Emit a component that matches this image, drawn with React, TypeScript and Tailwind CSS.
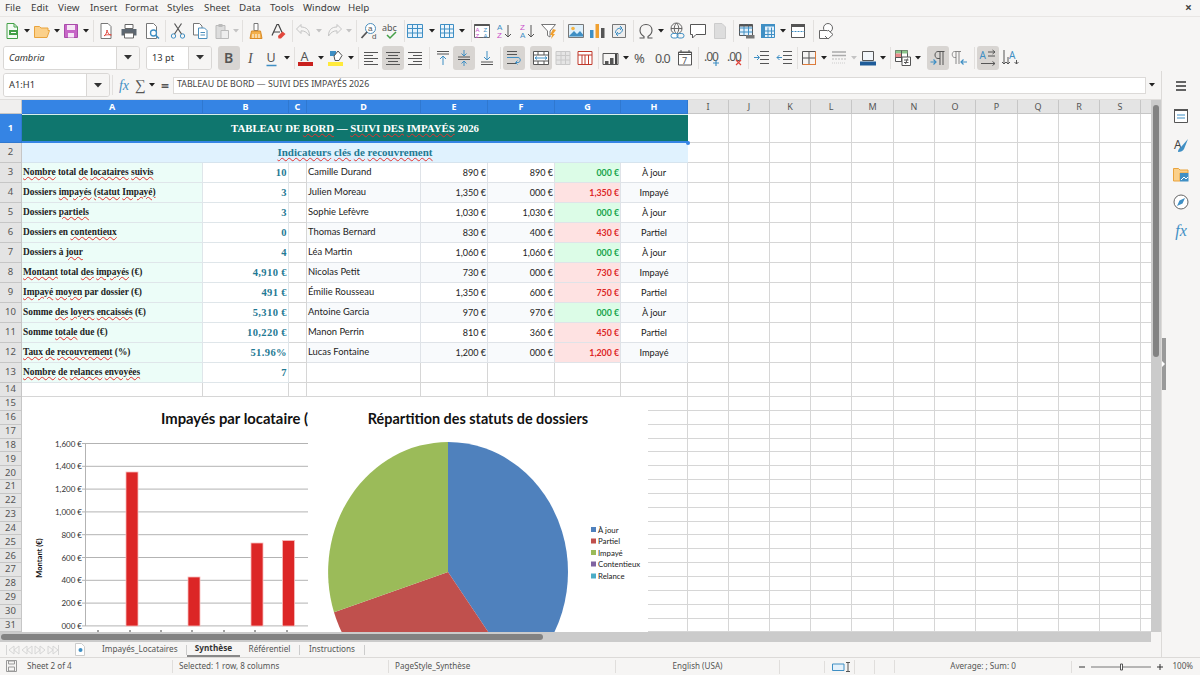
import React from "react";

const ink = "#555";
const blue = "#3f8fc4";

const Svg = ({ children, s = 18 }: { children: React.ReactNode; s?: number }) => (
  <svg width={s} height={s} viewBox="0 0 18 18" fill="none" strokeWidth={1} className="shrink-0">
    {children}
  </svg>
);

const lines = (ys: number[], x1: number, x2: number, c = ink) =>
  ys.map((y, i) => <path key={i} d={`M${x1} ${y + 0.5}H${x2}`} stroke={c} />);

const Icons: Record<string, React.ReactNode> = {
  new: (<><path d="M4 1.500h7l3.500 3.500v11.500H4z" fill="#f4fbf4" stroke="#43a047" /><path d="M11 1.500V5h3.500" stroke="#43a047" /><path d="M6 8h9v5H6z" fill="#43a047" /><path d="M8 10.500h5" stroke="#fff" /></>),
  open: (<path d="M1.500 4.500h5l1.500 1.500h7v2.500h1.500l-2.500 7h-12.500z" fill="#fbd08a" stroke="#e9a33c" />),
  save: (<><path d="M2.500 2.500h13v13h-13z" fill="#c766c7" stroke="#a94ba9" /><path d="M5 3h8v5H5z" fill="#f6e6f6" /><path d="M6 11h6v4.500H6z" fill="#f6e6f6" /></>),
  pdf: (<><path d="M4 1.500h7l3 3V16.500H4z" fill="#fff" stroke="#777" /><path d="M7 14c2-1 3-4 3-6 0 2 2 5 4 5s-6-1-7 1z" stroke="#e0463c" /></>),
  print: (<><path d="M5 2.500h8v4H5z" fill="#fff" stroke="#666" /><path d="M1.500 7h15v6.500h-15z" fill="#5c6670" /><path d="M4.500 11h9v5h-9z" fill="#fff" stroke="#666" /></>),
  preview: (<><path d="M3.500 1.500h7l3 3V16.500h-10z" fill="#fff" stroke="#777" /><circle cx="10.500" cy="11" r="3" fill="#fff" stroke={blue} strokeWidth="1.300" /><path d="M13 13.500l3 3" stroke={blue} strokeWidth="1.500" /></>),
  cut: (<><circle cx="4.500" cy="14" r="2.200" stroke={blue} /><circle cx="13.500" cy="14" r="2.200" stroke={blue} /><path d="M5.500 12L12.500 1.500M12.500 12L5.500 1.500" stroke={ink} strokeWidth="1.200" /></>),
  copy: (<><path d="M2.500 1.500h6l2.500 2.500v9h-8.500z" fill="#fff" stroke="#777" /><path d="M7.500 6h6l2.500 2.500v8h-8.500z" fill="#fff" stroke="#4c8fbd" /><path d="M9.500 10.500h4.500M9.500 13h4.500" stroke="#4c8fbd" /></>),
  paste: (<><path d="M3 3.500h9v13H3z" fill="#ddd" stroke="#bbb" /><path d="M5.500 2h4v3h-4z" fill="#bbb" /><path d="M8 8.500h7.500v8H8z" fill="#eee" stroke="#bbb" /></>),
  clone: (<><path d="M7 1.500h4v7H7z" fill="#fff" stroke="#777" /><path d="M4.500 9h9L15 16.500H3z" fill="#f3b04b" stroke="#d98a25" /><path d="M6 12v4M9 12v4M12 12v4" stroke="#fff" /></>),
  clear: (<><path d="M3 13.500L8 2.500h1.500l3.500 8" stroke="#444" strokeWidth="1.200" /><path d="M5 10h6" stroke="#444" /><path d="M9 14l4.500-4.500 3 2.500-4.500 4.500H9.500z" fill="#e2483d" /></>),
  undo: (<path d="M6 2.500L1.500 7l4.500 4.500V8.800c4 0 6 1.700 8.500 5.200 0-6-3-9-8.500-9z" stroke="#c5c5c5" />),
  redo: (<path d="M12 2.500L16.500 7 12 11.500V8.800c-4 0-6 1.700-8.500 5.200 0-6 3-9 8.500-9z" stroke="#c5c5c5" />),
  find: (<><circle cx="10.500" cy="6.500" r="5" fill="#fff" stroke="#4c8fbd" /><path d="M7 10L1.500 16" stroke={ink} strokeWidth="1.800" /><text x="8" y="9" fontSize="8" fill={ink} fontFamily="Liberation Sans">a</text><text x="12" y="17" fontSize="8" fill={ink} fontFamily="Liberation Sans">d</text></>),
  spell: (<><text x="0" y="9" fontSize="9" fill={ink} fontFamily="Noto Sans">abc</text><path d="M5 13l3 3 6-6" stroke="#43a047" strokeWidth="1.500" /></>),
  table: (<><path d="M1.500 2.500h15v13h-15z" fill="#e6f2fb" stroke="#3f8fc4" /><path d="M6.500 2.500v13M11.500 2.500v13M1.500 6.500h15M1.500 11h15" stroke="#3f8fc4" /></>),
  table2: (<><path d="M2.500 2.500h13v13h-13z" fill="#eef6fc" stroke="#3f8fc4" /><path d="M6.500 2.500v13M11.500 2.500v13M2.500 7h13M2.500 11h13" stroke="#3f8fc4" /></>),
  sort: (<><path d="M1.500 2.500h15v13h-15z" fill="#fff" stroke="#666" /><path d="M1.500 2h15v2h-15z" fill="#555" /><text x="2.500" y="10" fontSize="6" fill="#c94fc9" fontFamily="Liberation Sans">A</text><text x="2.500" y="15.500" fontSize="6" fill="#c94fc9" fontFamily="Liberation Sans">Z</text><text x="10.500" y="10" fontSize="6" fill="#3f8fc4" fontFamily="Liberation Sans">Z</text><text x="10.500" y="15.500" fontSize="6" fill="#3f8fc4" fontFamily="Liberation Sans">A</text></>),
  az: (<><text x="2" y="8" fontSize="8" fill="#3f8fc4" fontFamily="Liberation Sans">A</text><text x="2" y="16" fontSize="8" fill="#c94fc9" fontFamily="Liberation Sans">Z</text><path d="M13 3v12M10 12l3 3 3-3" stroke={ink} /></>),
  za: (<><text x="2" y="8" fontSize="8" fill="#c94fc9" fontFamily="Liberation Sans">Z</text><text x="2" y="16" fontSize="8" fill="#3f8fc4" fontFamily="Liberation Sans">A</text><path d="M13 3v12M10 12l3 3 3-3" stroke={ink} /></>),
  filter: (<><path d="M1.500 2.500h14L10 9v6L7.500 13.500V9z" fill="#fff" stroke="#777" /><path d="M13 7l3 1-3 4 2 0-4 5 1-4h-2z" fill="#f0a030" /></>),
  image: (<><path d="M1.500 2.500h15v13h-15z" fill="#dff0fb" stroke="#777" /><circle cx="6" cy="6.500" r="1.800" fill="#f5b342" /><path d="M2 14l5-5 3 3 3-3 3 3.500v2h-14z" fill="#3f8fc4" /></>),
  chart: (<><path d="M2 8h3.500v8H2z" fill="#3f8fc4" /><path d="M7.500 2h3.500v14H7.500z" fill="#f0a030" /><path d="M13 6h3.500v10H13z" fill="#555" /></>),
  pivot: (<><path d="M2.500 2.500h13v13h-13z" fill="#eee" stroke="#777" /><path d="M5.500 11c0-3 2-5 6-5M10 4l2 2-2 2M12.500 7c0 3-2 5-6 5M8 14l-2-2 2-2" stroke="#3f8fc4" /></>),
  omega: (<path d="M2.500 16h4.500v-1.500C4.500 13 3 11 3 8.500 3 5 5.500 2.500 9 2.500S15 5 15 8.500c0 2.500-1.500 4.500-4 6V16h4.500" stroke={ink} strokeWidth="1.100" />),
  link: (<><circle cx="8.500" cy="6.500" r="5.500" stroke="#666" /><path d="M3 6.500h11M8.500 1c-3 3-3 8 0 11M8.500 1c3 3 3 8 0 11" stroke="#666" /><rect x="3" y="11.500" width="7" height="4.500" rx="2.200" fill="#fff" stroke="#3f8fc4" /><rect x="9" y="11.500" width="7" height="4.500" rx="2.200" stroke="#3f8fc4" /></>),
  comment: (<path d="M1.500 2.500h15v10H7l-3.500 3.500v-3.500h-2z" fill="#fff" stroke="#555" />),
  doc: (<path d="M3.500 1.500h7.500l3.500 3.500v11.500h-11z" fill="#ddd" stroke="#ccc" />),
  parea: (<><path d="M1.500 2.500h13v11h-13z" fill="#e4f1fb" stroke="#555" /><path d="M1.500 6h13M1.500 10h13M6 2.500v11M10.500 2.500v11" stroke="#3f8fc4" /><path d="M1.500 2.500h13v2h-13z" fill="#555" /><path d="M8 13h8.500v3.500H8z" fill="#777" /></>),
  freeze: (<><path d="M2.500 2.500h13v13h-13z" fill="#e4f1fb" stroke="#3f8fc4" /><path d="M2 2h14v2.500H2z" fill="#3f8fc4" /><path d="M2 2h4v14H2z" fill="#3f8fc4" /><path d="M9 5.500v10M12.500 5.500v10M6 9h9.500M6 12.500h9.500" stroke="#3f8fc4" /></>),
  split: (<><path d="M2.500 2.500h13v13h-13z" fill="#fff" stroke="#555" /><path d="M2 2h14v3H2z" fill="#555" /><path d="M2.500 9.500h13" stroke="#3f8fc4" strokeDasharray="2 1" /></>),
  shapes: (<><circle cx="11" cy="6" r="4.500" fill="#fff" stroke="#666" /><path d="M2.500 8.500h8v8h-8z" fill="#fff" stroke="#666" /><path d="M11 8l5 4.500-5 4.500-3-3" stroke="#666" fill="#fff" /></>),
  italic: (<text x="6" y="14" fontSize="14" fill={ink} fontStyle="italic" fontFamily="Liberation Serif">I</text>),
  bold: (<text x="4" y="14" fontSize="14" fontWeight="600" fill={ink} fontFamily="Noto Sans">B</text>),
  under: (<><text x="3.500" y="13" fontSize="12.500" fill={ink} fontFamily="Noto Sans">U</text><path d="M3.500 16.500h10" stroke="#3f8fc4" strokeWidth="1.500" /></>),
  fcolor: (<><text x="3.500" y="12" fontSize="12.500" fill={ink} fontFamily="Noto Sans">A</text><path d="M1 13h15v4H1z" fill="#c9211e" /></>),
  bg: (<><path d="M3 2h6v5H3z" fill="#3f8fc4" /><path d="M7 7l4-5 4 4.500-3 5H8z" fill="#fff" stroke="#555" /><path d="M1 13h15v4H1z" fill="#ffea3b" /></>),
  aleft: <>{lines([3, 9, 15], 2, 16)}{lines([6, 12], 2, 11)}</>,
  acenter: <>{lines([3, 9, 15], 2, 16)}{lines([6, 12], 4, 14)}</>,
  aright: <>{lines([3, 9, 15], 2, 16)}{lines([6, 12], 7, 16)}</>,
  atop: (<><path d="M3 2.500h12M3 5h12" stroke={ink} /><path d="M9 16V7M6 10l3-3 3 3" stroke={blue} /></>),
  amid: (<><path d="M3 8h12M3 10.500h12" stroke={ink} /><path d="M9 1v6M6.500 4.500L9 7l2.500-2.500M9 17v-5M6.500 14.500L9 12l2.500 2.500" stroke={blue} /></>),
  abot: (<><path d="M3 13h12M3 15.500h12" stroke={ink} /><path d="M9 2v9M6 8l3 3 3-3" stroke={blue} /></>),
  wrap: (<>{lines([2, 5, 14], 2, 12)}<path d="M2 8.500h11c3 0 3 5 0 5h-2" stroke={blue} /><path d="M12.500 11.500l-2 2 2 2" stroke={blue} /></>),
  merge: (<><path d="M1.500 2.500h15v13h-15z" fill="#fff" stroke="#555" /><path d="M1.500 6h15M1.500 12h15M6 2.500V6M12 2.500V6M6 12v3.500M12 12v3.500" stroke="#555" /><path d="M3 9h12M5 7.500L3 9l2 1.500M13 7.500L15 9l-2 1.500" stroke={blue} /></>),
  mergeg: (<><path d="M2 2.500h14v13H2z" fill="#e5e5e5" stroke="#c9c9c9" /><path d="M2 6.500h14M2 11h14M7 2.500v13M11.500 2.500v13" stroke="#c9c9c9" /></>),
  unmerge: (<><path d="M2 2.500h14v13H2z" fill="#fff" stroke="#c0392b" /><path d="M2 6h14M6 6v9.500M9 6v9.500M12.500 6v9.500" stroke="#c0392b" /></>),
  nfmt: (<><path d="M1 4.500h15v11H1z" stroke="#555" /><path d="M3 12h3.500v3H3zM8 9h3.500v6H8z" fill="#555" /><path d="M13 5h2v10h-2z" fill="#444" /></>),
  pct: (<text x="2" y="14" fontSize="13" fill={ink} fontFamily="Noto Sans">%</text>),
  num: (<text x="1" y="14" fontSize="12.500" letterSpacing="-1" fill={ink} fontFamily="Noto Sans">0.0</text>),
  date: (<><path d="M2.500 3.500h13v12.500h-13z" fill="#fff" stroke="#555" /><path d="M2.500 3h13v2.500h-13zM5 1v3M13 1v3" stroke="#555" /><text x="6" y="14.500" fontSize="9" fill={ink} fontFamily="Noto Sans">7</text></>),
  decp: (<><text x="1" y="12" fontSize="12" letterSpacing="-1" fill={ink} fontFamily="Noto Sans">.00</text><path d="M13 11v6M10 14h6" stroke={blue} strokeWidth="1.200" /></>),
  decm: (<><text x="1" y="12" fontSize="12" letterSpacing="-1" fill={ink} fontFamily="Noto Sans">.00</text><path d="M10 11l5 5M15 11l-5 5" stroke="#e0463c" strokeWidth="1.200" /></>),
  indp: (<>{lines([2, 6, 10, 14], 7, 16)}<path d="M1 8.500h5M4 6l2.500 2.500L4 11" stroke={blue} /></>),
  indm: (<>{lines([2, 6, 10, 14], 7, 16)}<path d="M6 8.500H1M3.500 6L1 8.500 3.500 11" stroke={blue} /></>),
  border: (<><path d="M2.500 2.500h13v13h-13z" stroke="#555" /><path d="M2.500 9h13M9 2.500v13" stroke="#555" /><path d="M2.500 15.500h13M15.500 2.500v13" stroke="#e07b39" /></>),
  bstyle: (<><path d="M2 3h14M2 6.500h14" stroke="#aaa" strokeWidth="1.500" /><path d="M2 10h14" stroke="#bbb" strokeDasharray="2 1" /><path d="M2 14h14" stroke="#ccc" strokeDasharray="1 1" /></>),
  bcolor: (<><path d="M3.500 2.500h11v9h-11z" fill="#f2f6fa" stroke="#555" /><path d="M1 12.500h16v4H1z" fill="#1f5c99" /></>),
  cond: (<><path d="M1.500 1.500h12v11h-12z" fill="#fff" stroke="#555" /><path d="M1.500 1.500h12v3h-12z" fill="#8cc68c" /><path d="M1.500 4.500h6v4h-6z" fill="#e98a8a" /><path d="M1.500 8.500h12M7.500 1.500v11" stroke="#555" /><path d="M8 8h8.500v8.500H8z" fill="#fff" stroke="#555" /><path d="M10 11h4.500M10 13.500h4.500M13.500 9.500l-2 5.500" stroke="#555" /></>),
  ltr: (<><path d="M14 16V2.500M11 16V2.500M15.500 2.500H9c-4 0-4 7 0 7h2" stroke="#555" /><path d="M1.500 13H7M4.500 10.500L7 13l-2.500 2.500" stroke={blue} strokeWidth="1.200" /></>),
  rtl: (<><path d="M8 15V2.500M5 15V2.500M10 2.500H3.500c-3 0-3 6 0 6H5" stroke="#888" /><path d="M16 13h-6M12.500 10.500L10 13l2.500 2.500" stroke={blue} strokeWidth="1.200" /></>),
  htxt: (<><text x="0.500" y="9.500" fontSize="10" fill={blue} fontFamily="Noto Sans">A</text><path d="M9 3h7M9 7h7M2 14.500h14M13.500 1l2.500 2-2.500 2M13.500 12.500l2.500 2-2.500 2" stroke={ink} /></>),
  vtxt: (<><text x="8" y="10" fontSize="10" fill={blue} fontFamily="Noto Sans">A</text><path d="M3 1v14M7 8v7M15.500 11v4M1 13l2 2 2-2M5 13l2 2 2-2M13.500 13l2 2 2-2" stroke={ink} /></>),
};

const Slot = ({ c, n, hl }: { c: string; n: string; hl?: boolean }) => (
  <div className={`${c} h-[24px] shrink-0 flex items-center justify-center rounded-[3px] ${hl ? "bg-[#d8d5d2]" : ""}`}>
    <Svg>{Icons[n]}</Svg>
  </div>
);

const Caret = ({ c, gray }: { c: string; gray?: boolean }) => (
  <div className={`${c} shrink-0 flex items-center justify-center`}>
    <svg width="6" height="4" viewBox="0 0 6 4">
      <path d="M0 0h6L3 3.500z" fill={gray ? "#c4c4c4" : "#222"} />
    </svg>
  </div>
);

const Sep = ({ c }: { c: string }) => (
  <div className={`${c} shrink-0 h-[22px] flex justify-center`}>
    <div className="w-px h-full bg-[#e2e0de]" />
  </div>
);

const Combo = ({ c, d, text, italic }: { c: string; d: string; text: string; italic?: boolean }) => (
  <div className={`${c} h-[24px] shrink-0 flex rounded-[3px] border border-[#d9d7d5] overflow-hidden`}>
    <div className={`flex-1 bg-white flex items-center px-[5px] text-[9.300px] text-[#333] ${italic ? "italic" : ""}`}>{text}</div>
    <div className={`${d} bg-[#f6f5f4] border-l border-[#d9d7d5] flex items-center justify-center`}>
      <svg width="8" height="5" viewBox="0 0 8 5"><path d="M0 0h8L4 4.500z" fill="#333" /></svg>
    </div>
  </div>
);

const Wavy = ({ text }: { text: string }) => (
  <>
    {text.split(" ").map((w, i) => (
      <React.Fragment key={i}>
        {i > 0 ? " " : ""}
        {w.startsWith("~") ? (
          <span className="underline decoration-wavy decoration-[#e5322d] decoration-1 underline-offset-[1px]">{w.slice(1)}</span>
        ) : (
          w
        )}
      </React.Fragment>
    ))}
  </>
);

const labels = [
  "~Nombre total ~de ~locataires ~suivis",
  "Dossiers ~impayés ~(statut ~Impayé)",
  "Dossiers ~partiels",
  "Dossiers en ~contentieux",
  "Dossiers à ~jour",
  "~Montant total ~des ~impayés (€)",
  "~Impayé ~moyen par dossier (€)",
  "Somme ~des ~loyers ~encaissés (€)",
  "Somme ~totale due (€)",
  "~Taux ~de ~recouvrement (%)",
  "~Nombre ~de ~relances ~envoyées",
];
const values = ["10", "3", "3", "0", "4", "4,910 €", "491 €", "5,310 €", "10,220 €", "51.96%", "7"];
const people: [string, string, string, string, string][] = [
  ["Camille Durand", "890 €", "890 €", "000 €", "À jour"],
  ["Julien Moreau", "1,350 €", "000 €", "1,350 €", "Impayé"],
  ["Sophie Lefèvre", "1,030 €", "1,030 €", "000 €", "À jour"],
  ["Thomas Bernard", "830 €", "400 €", "430 €", "Partiel"],
  ["Léa Martin", "1,060 €", "1,060 €", "000 €", "À jour"],
  ["Nicolas Petit", "730 €", "000 €", "730 €", "Impayé"],
  ["Émilie Rousseau", "1,350 €", "600 €", "750 €", "Partiel"],
  ["Antoine Garcia", "970 €", "970 €", "000 €", "À jour"],
  ["Manon Perrin", "810 €", "360 €", "450 €", "Partiel"],
  ["Lucas Fontaine", "1,200 €", "000 €", "1,200 €", "Impayé"],
];
const colNames = "ABCDEFGHIJKLMNOPQRS".split("");
const serif = "font-['Liberation_Serif','Times_New_Roman',serif]";
const lato = "font-['Lato','Liberation_Sans',sans-serif]";

const Blank = ({ n = 12 }: { n?: number }) => (
  <>
    {Array.from({ length: n }).map((_, i) => (
      <div key={i} className="border-r border-b border-[#d6d6d6] bg-white" />
    ))}
  </>
);

const RowHead = ({ n, on }: { n: number; on?: boolean }) => (
  <div
    className={`border-r border-b flex items-center justify-center text-[9.500px] ${
      on ? "bg-[#3584e4] border-[#2f78d0] text-white font-bold" : "bg-[#e4e4e4] border-[#c6c6c6] text-[#555]"
    }`}
  >
    {n}
  </div>
);

const Grid = () => (
  <div className="relative w-[1151px] h-[532px] overflow-hidden bg-white">
    <div className="grid grid-cols-[22px_181px_86px_18px_114px_67px_67px_66px_67px_41px_41px_41px_41px_42px_41px_41px_42px_41px_41px_41px_41px] grid-rows-[14px_29px_20px_repeat(11,20px)_14px_repeat(17,13.85px)] w-[1182px]">
      <div className="bg-[#f0efee] border-r border-b border-[#c6c6c6]" />
      {colNames.map((c, i) => (
        <div
          key={c}
          className={`border-r border-b flex items-center justify-center text-[9px] ${
            i < 8 ? "bg-[#3584e4] border-[#2f78d0] text-white font-bold" : "bg-[#e4e4e4] border-[#c6c6c6] text-[#555]"
          }`}
        >
          {c}
        </div>
      ))}
      <div className="bg-[#e4e4e4] border-b border-[#c6c6c6]" />

      <RowHead n={1} on />
      <div className={`col-span-8 bg-[#0f766e] border-t border-b-2 border-t-[#d8f0ec] border-b-[#3584e4] flex items-center justify-center text-white font-bold text-[10.800px] ${serif}`}>
        <span>
          <Wavy text="TABLEAU DE ~BORD — ~SUIVI ~DES ~IMPAYÉS 2026" />
        </span>
      </div>
      <Blank />

      <RowHead n={2} />
      <div className={`col-span-8 bg-[#e0f2fe] border-b border-[#d6e4ee] flex items-center justify-center text-[#1f7a94] font-bold text-[11px] ${serif}`}>
        <span>
          <Wavy text="~Indicateurs ~clés ~de ~recouvrement" />
        </span>
      </div>
      <Blank />

      {labels.map((l, i) => {
        const p = people[i];
        const alt = i % 2 === 1 ? "bg-[#f8fafc]" : "bg-white";
        const good = p && p[3] === "000 €";
        return (
          <React.Fragment key={i}>
            <RowHead n={i + 3} />
            <div className={`bg-[#ecfdf8] border-r border-b border-[#dfe6ea] flex items-center pl-[1px] text-[#222] font-bold text-[9.400px] whitespace-nowrap overflow-hidden ${serif}`}>
              <span><Wavy text={l} /></span>
            </div>
            <div className={`bg-white border-r border-b border-[#dfe6ea] flex items-center justify-end pr-[1px] text-[#1f7a94] font-bold text-[10.500px] tracking-[0.4px] ${serif}`}>
              {values[i]}
            </div>
            <div className="bg-white border-r border-b border-[#d6d6d6]" />
            {p ? (
              <>
                <div className={`${alt} border-r border-b border-[#dfe3e8] flex items-center pl-[1px] text-[#222] text-[9.400px] ${lato}`}>{p[0]}</div>
                <div className={`${alt} border-r border-b border-[#dfe3e8] flex items-center justify-end pr-[1px] text-[#222] text-[9px] ${lato}`}>{p[1]}</div>
                <div className={`${alt} border-r border-b border-[#dfe3e8] flex items-center justify-end pr-[1px] text-[#222] text-[9px] ${lato}`}>{p[2]}</div>
                <div className={`${good ? "bg-[#dcfce7] text-[#16a34a]" : "bg-[#fee2e2] text-[#dc2626]"} border-r border-b border-[#dfe3e8] flex items-center justify-end pr-[1px] font-bold text-[8.800px] ${lato}`}>{p[3]}</div>
                <div className={`${alt} border-r border-b border-[#dfe3e8] flex items-center justify-center text-[#222] text-[9.200px] ${lato}`}>{p[4]}</div>
              </>
            ) : (
              <Blank n={5} />
            )}
            <Blank />
          </React.Fragment>
        );
      })}

      <RowHead n={14} />
      <Blank n={20} />
      {Array.from({ length: 17 }).map((_, i) => (
        <React.Fragment key={i}>
          <RowHead n={i + 15} />
          <Blank n={20} />
        </React.Fragment>
      ))}
    </div>

    <div className="absolute left-[686px] top-[41px] w-[4px] h-[4px] rounded-full bg-[#3584e4]" />

    <div className="absolute left-[22px] top-[297px] w-[286px] h-[235px] bg-white">
      <svg width="286" height="235" viewBox="22 397 286 235" className={lato}>
        <text x="161" y="424" fontSize="14.800" fontWeight="700" fill="#111">Impayés par locataire (€)</text>
        {[1600, 1400, 1200, 1000, 800, 600, 400, 200, 0].map((v, i) => {
          const y = 443.5 + i * 22.8;
          const s = v === 0 ? "000 €" : v >= 1000 ? `${String(v).slice(0, 1)},${String(v).slice(1)} €` : `${v} €`;
          return (
            <g key={v}>
              <path d={`M82 ${y}H308`} stroke="#b3b3b3" strokeWidth="1" />
              <text x="82" y={y + 3} fontSize="8" textAnchor="end" fill="#333">{s}</text>
            </g>
          );
        })}
        <path d="M85.500 443V626" stroke="#b3b3b3" />
        {[[126, 472], [188, 577], [251, 543], [282.500, 540.500]].map(([x, y]) => (
          <rect key={x} x={x} y={y} width="12" height={626 - y} fill="#dc2626" stroke="#f7bcbc" strokeWidth="0.800" />
        ))}
        {[98, 130, 161, 192, 224, 255, 287].map((x) => (
          <path key={x} d={`M${x} 630v2`} stroke="#444" />
        ))}
        <text transform="translate(42 558) rotate(-90)" fontSize="7.500" fontWeight="700" textAnchor="middle" fill="#111">Montant (€)</text>
      </svg>
    </div>

    <div className="absolute left-[308px] top-[297px] w-[340px] h-[235px] bg-white">
      <svg width="340" height="235" viewBox="308 397 340 235" className={lato}>
        <text x="478" y="424" fontSize="14.400" fontWeight="700" textAnchor="middle" fill="#111">Répartition des statuts de dossiers</text>
        <path d="M448 572V442A120 130 0 0 1 518.500 677.200Z" fill="#4f81bd" />
        <path d="M448 572L518.500 677.200A120 130 0 0 1 334 612.200Z" fill="#c0504d" />
        <path d="M448 572L334 612.200A120 130 0 0 1 448 442Z" fill="#9bbb59" />
        {[["À jour", "#4f81bd", 529.500], ["Partiel", "#c0504d", 541], ["Impayé", "#9bbb59", 552.500], ["Contentieux", "#8064a2", 564], ["Relance", "#4bacc6", 576]].map(([t, c, y]) => (
          <g key={t as string}>
            <rect x="591" y={(y as number) - 2.500} width="5" height="5" fill={c as string} />
            <text x="598" y={(y as number) + 3} fontSize="7.800" fill="#222">{t}</text>
          </g>
        ))}
      </svg>
    </div>
  </div>
);

export default function App() {
  return (
    <div className="w-[1200px] h-[675px] overflow-hidden bg-[#f6f5f4] flex flex-col font-['Noto_Sans','Liberation_Sans',sans-serif] text-[#333]">
      {/* menu */}
      <div className="relative h-[17px] shrink-0 flex items-center text-[9.800px] text-[#3c3c3c] border-b border-[#e8e6e4]">
        <span className="w-[31px] pl-[5px]">File</span>
        <span className="w-[27px]">Edit</span>
        <span className="w-[32px]">View</span>
        <span className="w-[35px]">Insert</span>
        <span className="w-[42px]">Format</span>
        <span className="w-[37px]">Styles</span>
        <span className="w-[35px]">Sheet</span>
        <span className="w-[31px]">Data</span>
        <span className="w-[33px]">Tools</span>
        <span className="w-[45px]">Window</span>
        <span className="w-[30px]">Help</span>
        <span className="absolute left-[1185px] top-[-1px] text-[12px] font-bold text-[#444]">×</span>
      </div>

      {/* toolbar 1 */}
      <div className="h-[27px] shrink-0 flex items-center pl-[1px]">
        <Slot c="w-[22px]" n="new" /><Caret c="w-[8px]" /><Slot c="w-[22px]" n="open" /><Caret c="w-[8px]" /><Slot c="w-[20px]" n="save" /><Caret c="w-[10px]" /><Sep c="w-[4px]" />
        <Slot c="w-[22px]" n="pdf" /><Slot c="w-[24px]" n="print" /><Slot c="w-[22px]" n="preview" /><Sep c="w-[4px]" />
        <Slot c="w-[22px]" n="cut" /><Slot c="w-[22px]" n="copy" /><Slot c="w-[22px]" n="paste" /><Caret c="w-[6px]" gray /><Sep c="w-[6px]" />
        <Slot c="w-[22px]" n="clone" /><Slot c="w-[22px]" n="clear" /><Sep c="w-[6px]" />
        <Slot c="w-[18px]" n="undo" /><Caret c="w-[12px]" gray /><Slot c="w-[18px]" n="redo" /><Caret c="w-[12px]" gray /><Sep c="w-[3px]" />
        <Slot c="w-[22px]" n="find" /><Slot c="w-[22px]" n="spell" /><Sep c="w-[4px]" />
        <Slot c="w-[18px]" n="table" /><Caret c="w-[16px]" /><Slot c="w-[14px]" n="table2" /><Caret c="w-[16px]" /><Sep c="w-[2px]" />
        <Slot c="w-[20px]" n="sort" /><Slot c="w-[24px]" n="az" /><Slot c="w-[22px]" n="za" /><Slot c="w-[22px]" n="filter" /><Sep c="w-[6px]" />
        <Slot c="w-[20px]" n="image" /><Slot c="w-[22px]" n="chart" /><Slot c="w-[22px]" n="pivot" /><Sep c="w-[6px]" />
        <Slot c="w-[20px]" n="omega" /><Caret c="w-[10px]" /><Slot c="w-[22px]" n="link" /><Slot c="w-[20px]" n="comment" /><Slot c="w-[24px]" n="doc" /><Sep c="w-[2px]" />
        <Slot c="w-[26px]" n="parea" /><Slot c="w-[16px]" n="freeze" /><Caret c="w-[14px]" /><Slot c="w-[16px]" n="split" /><Sep c="w-[14px]" />
        <Slot c="w-[12px]" n="shapes" />
      </div>

      {/* toolbar 2 */}
      <div className="h-[27px] shrink-0 flex items-center pl-[3px]">
        <Combo c="w-[137px]" d="w-[23px]" text="Cambria" italic />
        <div className="w-[6px] shrink-0" />
        <Combo c="w-[66px]" d="w-[23px]" text="13 pt" />
        <div className="w-[6px] shrink-0" />
        <Slot c="w-[22px]" n="bold" hl /><Slot c="w-[22px]" n="italic" /><Slot c="w-[20px]" n="under" /><Caret c="w-[10px]" /><Sep c="w-[4px]" />
        <Slot c="w-[20px]" n="fcolor" /><Caret c="w-[10px]" /><Slot c="w-[20px]" n="bg" /><Caret c="w-[10px]" /><Sep c="w-[4px]" />
        <Slot c="w-[22px]" n="aleft" /><Slot c="w-[22px]" n="acenter" hl /><Slot c="w-[22px]" n="aright" /><Sep c="w-[6px]" />
        <Slot c="w-[21px]" n="atop" /><Slot c="w-[22px]" n="amid" hl /><Slot c="w-[23px]" n="abot" /><Sep c="w-[5px]" />
        <Slot c="w-[22px]" n="wrap" hl /><div className="w-[5px] shrink-0" /><Slot c="w-[22px]" n="merge" hl /><Slot c="w-[22px]" n="mergeg" /><Slot c="w-[22px]" n="unmerge" /><Sep c="w-[4px]" />
        <Slot c="w-[22px]" n="nfmt" /><Caret c="w-[8px]" /><Slot c="w-[22px]" n="pct" /><Slot c="w-[22px]" n="num" /><Slot c="w-[22px]" n="date" /><Sep c="w-[4px]" />
        <Slot c="w-[24px]" n="decp" /><Slot c="w-[22px]" n="decm" /><Sep c="w-[4px]" />
        <Slot c="w-[24px]" n="indp" /><Slot c="w-[22px]" n="indm" /><Sep c="w-[2px]" />
        <Slot c="w-[22px]" n="border" /><Caret c="w-[8px]" /><Slot c="w-[22px]" n="bstyle" /><Caret c="w-[8px]" gray /><Slot c="w-[20px]" n="bcolor" /><Caret c="w-[10px]" /><Sep c="w-[5px]" />
        <Slot c="w-[20px]" n="cond" /><Caret c="w-[10px]" /><div className="w-[4px] shrink-0" />
        <Slot c="w-[22px]" n="ltr" hl /><Slot c="w-[22px]" n="rtl" /><Sep c="w-[6px]" />
        <Slot c="w-[22px]" n="htxt" hl /><Slot c="w-[22px]" n="vtxt" />
      </div>

      {/* main */}
      <div className="h-[586px] shrink-0 flex">
        <div className="w-[1161px] shrink-0 flex flex-col">
          {/* formula bar */}
          <div className="h-[29px] shrink-0 flex items-center pl-[3px] border-b border-[#e0dedc]">
            <Combo c="w-[107px]" d="w-[23px]" text="A1:H1" />
            <div className="w-[5px] shrink-0 flex justify-center"><div className="w-px h-[20px] bg-[#e2e0de]" /></div>
            <div className="w-[18px] shrink-0 text-center text-[14px] italic text-[#3f8fc4] font-['Liberation_Serif',serif]">fx</div>
            <div className="w-[14px] shrink-0 text-center text-[15px] text-[#555] font-['Liberation_Serif',serif]">∑</div>
            <Caret c="w-[10px]" />
            <div className="w-[16px] shrink-0 text-center text-[14px] font-bold text-[#555]">=</div>
            <div className="w-[973px] h-[17px] shrink-0 bg-white border border-[#dcdad8] flex items-center pl-[3px] text-[8.800px] text-[#444] whitespace-nowrap">
              TABLEAU DE BORD — SUIVI DES IMPAYÉS 2026
            </div>
            <Caret c="w-[12px]" />
          </div>

          {/* sheet + vertical scrollbar */}
          <div className="h-[532px] shrink-0 flex">
            <Grid />
            <div className="w-[10px] shrink-0 bg-[#cbcbcb] pt-[5px] flex justify-center">
              <div className="w-[6px] h-[252px] rounded-[3px] bg-[#828282]" />
            </div>
          </div>

          {/* horizontal scrollbar */}
          <div className="h-[10px] shrink-0 flex items-center bg-[#cbcbcb] w-[1151px] pl-[1px]">
            <div className="w-[542px] h-[6px] rounded-[3px] bg-[#828282]" />
          </div>

          {/* sheet tabs */}
          <div className="h-[15px] shrink-0 flex items-center text-[8.200px] text-[#555] whitespace-nowrap">
            <div className="w-[75px] shrink-0 pl-[5px] flex items-center">
              <svg width="55" height="12" viewBox="0 0 55 12" fill="none" stroke="#d6d6d6">
                <path d="M1.500 1v10M9 2L4 6l5 4zM14 2L9 6l5 4zM22 2l-5 4 5 4zM27 2l-5 4 5 4zM30 2l5 4-5 4zM35 2l5 4-5 4zM43 2l5 4-5 4zM48 2l5 4-5 4zM53.500 1v10" />
              </svg>
            </div>
            <svg width="10" height="13" viewBox="0 0 10 13" className="shrink-0">
              <path d="M.5.5h6l3 3v9H.5z" fill="#fff" stroke="#ccc" />
              <circle cx="5.500" cy="7" r="2" fill="#3f8fc4" />
            </svg>
            <div className="w-[17px] shrink-0" />
            <div className="w-[84px] shrink-0">Impayés_Locataires</div>
            <div className="w-px h-[10px] bg-[#ccc] shrink-0" />
            <div className="w-[53px] shrink-0 h-full flex items-center justify-center font-bold text-[#333] border-b-2 border-[#888]">Synthèse</div>
            <div className="w-[59px] shrink-0 text-center">Référentiel</div>
            <div className="w-px h-[10px] bg-[#ccc] shrink-0" />
            <div className="w-[64px] shrink-0 text-center">Instructions</div>
            <div className="w-px h-[10px] bg-[#ccc] shrink-0" />
          </div>
        </div>

        {/* sidebar */}
        <div className="relative w-[39px] shrink-0 border-l border-[#dcdad8] flex flex-col items-center">
          <div className="h-[29px] flex items-center">
            <svg width="14" height="12" viewBox="0 0 14 12"><path d="M2 2h10M2 6h10M2 10h10" stroke="#333" strokeWidth="1.300" /></svg>
          </div>
          <div className="h-[29px] mt-[1px] flex items-center">
            <Svg><path d="M2.500 2.500h13v13h-13z" fill="#fff" stroke="#555" /><path d="M2 2h14v2H2z" fill="#555" /><path d="M5 8h8M5 11h8" stroke={blue} /></Svg>
          </div>
          <div className="h-[29px] flex items-center">
            <Svg><text x="2" y="13" fontSize="12" fill="#444" fontFamily="Noto Sans">A</text><path d="M16 3L9 11c-2 1-3 3-3 5 3 0 5-1 6-3z" fill={blue} /></Svg>
          </div>
          <div className="h-[29px] flex items-center">
            <Svg><path d="M1.500 3.500h5l1.500 1.500h8v3h-8v8h-6.500z" fill="#fbd08a" stroke="#e9a33c" /><path d="M8 8h8.500v8.500H8z" fill={blue} /><path d="M9 15l3-3 2 2 2-2" stroke="#fff" /></Svg>
          </div>
          <div className="h-[28px] flex items-center">
            <Svg><circle cx="9" cy="9" r="7" fill="#fff" stroke="#666" /><path d="M13 5l-2.500 5.500L5 13l2.500-5.500z" fill={blue} /></Svg>
          </div>
          <div className="h-[30px] flex items-center text-[16px] italic text-[#3f8fc4] font-['Liberation_Serif',serif]">fx</div>
          <div className="absolute left-0 top-[267px] w-[4px] h-[52px] bg-[#9a9a9a] flex items-center">
            <svg width="4" height="6" viewBox="0 0 4 6"><path d="M0 0l3 3-3 3z" fill="#fff" /></svg>
          </div>
        </div>
      </div>

      {/* status bar */}
      <div className="h-[18px] shrink-0 border-t border-[#dcdad8] flex items-center text-[8.100px] text-[#555] whitespace-nowrap">
        <div className="w-[172px] shrink-0 flex items-center pl-[6px] gap-[10px]">
          <svg width="11" height="12" viewBox="0 0 11 12"><path d="M.5.500h10v11H.5z" stroke="#999" fill="none" /><path d="M2.500 1h6v3h-6zM2.500 7h6v4h-6z" stroke="#999" fill="none" /></svg>
          Sheet 2 of 4
        </div>
        <div className="w-[216px] shrink-0 pl-[6px] border-l border-[#e0dedc]">Selected: 1 row, 8 columns</div>
        <div className="w-[227px] shrink-0 pl-[6px] border-l border-[#e0dedc]">PageStyle_Synthèse</div>
        <div className="w-[164px] shrink-0 text-center border-l border-[#e0dedc]">English (USA)</div>
        <div className="w-[45px] shrink-0 border-l border-[#e0dedc] h-[14px]" />
        <div className="w-[30px] shrink-0 border-l border-[#e0dedc] flex items-center pl-[7px]">
          <svg width="20" height="12" viewBox="0 0 20 12"><path d="M.5 3h11.500v6.500H.5z" fill="#e4f1fb" stroke="#3f8fc4" /><path d="M14 1.500h4M14 10.500h4M16 1.500v9" stroke="#555" /></svg>
        </div>
        <div className="w-[20px] shrink-0 border-l border-[#e0dedc] h-[14px]" />
        <div className="w-[20px] shrink-0 border-l border-[#e0dedc] h-[14px]" />
        <div className="w-[177px] shrink-0 text-center border-l border-[#e0dedc]">Average: ; Sum: 0</div>
        <div className="w-[100px] shrink-0 flex items-center border-l border-[#e0dedc] pl-[3px]">
          <svg width="90" height="12" viewBox="0 0 90 12"><path d="M16 6h60" stroke="#777" /><path d="M82 6h6M85 3v6M4 6h6" stroke="#333" /><path d="M45.500 3h2v6h-2z" fill="#fff" stroke="#555" /></svg>
        </div>
        <div className="flex-1 text-right pr-[7px]">100%</div>
      </div>
    </div>
  );
}
